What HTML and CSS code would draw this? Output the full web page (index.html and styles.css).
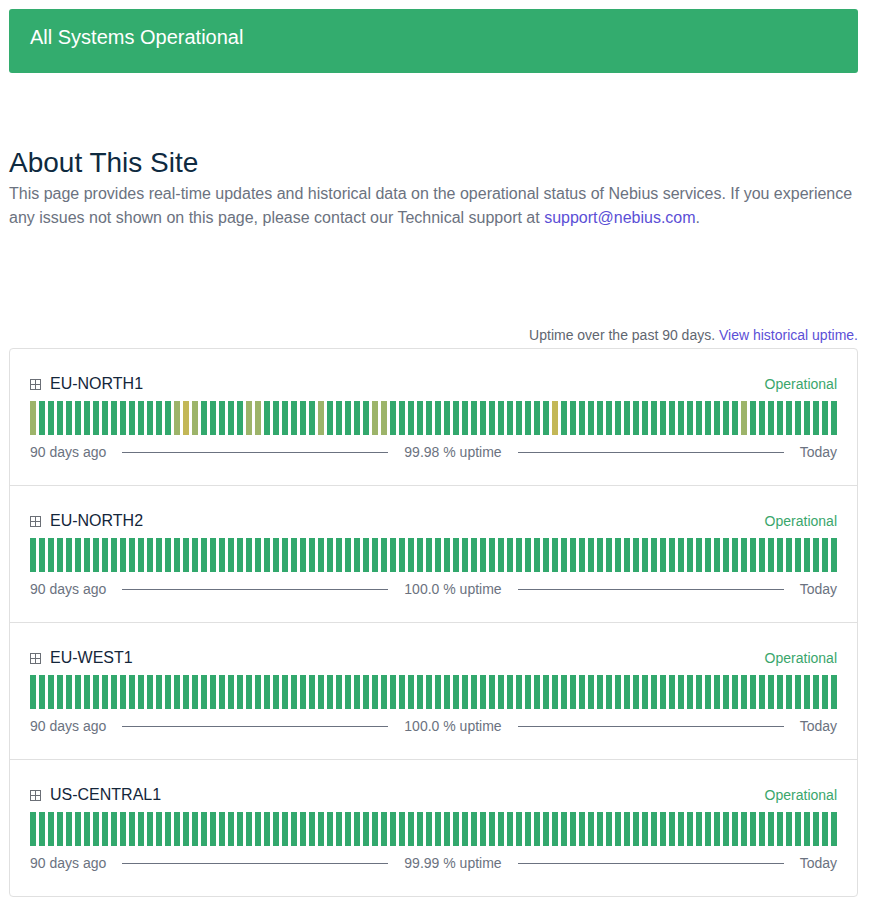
FILE: index.html
```html
<!DOCTYPE html>
<html lang="en">
<head>
    <meta charset="UTF-8">
    <meta name="viewport" content="width=device-width, initial-scale=1.0">
    <title>Nebius Status</title>
    <link rel="stylesheet" href="styles.css">
</head>
<body>
    <div class="container">
        <div class="status-banner">All Systems Operational</div>

        <div class="about">
            <h2 class="about-title">About This Site</h2>
            <p class="about-text">This page provides real-time updates and historical data on the operational status of Nebius services. If you experience any issues not shown on this page, please contact our Technical support at <a href="#" class="link">support@nebius.com</a>.</p>
        </div>

        <div class="uptime-note">Uptime over the past 90 days. <a href="#" class="link">View historical uptime.</a></div>

        <div class="components" id="components"></div>
    </div>

    <script>
        var components = [
            { name: "EU-NORTH1", uptime: "99.98", olive: [0, 16, 18, 24, 25, 32, 38, 39, 79], yellow: [17, 58] },
            { name: "EU-NORTH2", uptime: "100.0", olive: [], yellow: [] },
            { name: "EU-WEST1", uptime: "100.0", olive: [], yellow: [] },
            { name: "US-CENTRAL1", uptime: "99.99", olive: [], yellow: [] }
        ];

        var icon = '<svg class="expand-icon" width="11" height="11" viewBox="0 0 11 11">' +
            '<rect x="0.5" y="0.5" width="10" height="10" fill="none" stroke="#6b6f76" stroke-width="1"/>' +
            '<path d="M1 5.5h9M5.5 1v9" stroke="#6b6f76" stroke-width="1"/></svg>';

        var html = '';
        components.forEach(function (c) {
            var bars = '';
            for (var i = 0; i < 90; i++) {
                var cls = 'bar';
                if (c.olive.indexOf(i) !== -1) cls += ' bar-minor';
                if (c.yellow.indexOf(i) !== -1) cls += ' bar-partial';
                bars += '<span class="' + cls + '"></span>';
            }
            html += '<div class="component">' +
                '<div class="component-head">' +
                    '<span class="component-name">' + icon + c.name + '</span>' +
                    '<span class="component-status">Operational</span>' +
                '</div>' +
                '<div class="bars">' + bars + '</div>' +
                '<div class="component-foot">' +
                    '<span>90 days ago</span><span class="rule"></span>' +
                    '<span>' + c.uptime + ' % uptime</span><span class="rule"></span>' +
                    '<span>Today</span>' +
                '</div>' +
            '</div>';
        });
        document.getElementById("components").innerHTML = html;
    </script>
</body>
</html>
```

FILE: styles.css
```css
body {
    font-family: 'Liberation Sans', Arial, sans-serif;
    background-color: #fff;
    color: #333;
    margin: 0;
    padding: 0;
}

.container {
    width: 849px;
    margin: 9px;
}

.status-banner {
    background-color: #33ac6e;
    color: #fff;
    font-size: 20px;
    line-height: 24px;
    padding: 16px 21px 24px;
    border-radius: 3px;
}

.about {
    margin-top: 73px;
}

.about-title {
    font-size: 28px;
    font-weight: normal;
    line-height: 34px;
    color: #0e2a40;
    margin: 0;
}

.about-text {
    font-size: 16px;
    line-height: 24px;
    color: #6b7280;
    margin: 2px 0 0;
}

.link {
    color: #5b4fd6;
    text-decoration: none;
}

.uptime-note {
    margin-top: 95px;
    text-align: right;
    font-size: 14px;
    line-height: 20px;
    color: #5f6670;
}

.components {
    margin-top: 3px;
    border: 1px solid #e0e0e0;
    border-radius: 4px;
}

.component {
    padding: 23px 20px 23px;
    border-top: 1px solid #e0e0e0;
}

.component:first-child {
    border-top: none;
}

.component-head {
    display: flex;
    justify-content: space-between;
    align-items: center;
    line-height: 24px;
}

.component-name {
    display: flex;
    align-items: center;
    font-size: 16px;
    color: #14263a;
}

.expand-icon {
    margin-right: 9px;
}

.component-status {
    font-size: 14px;
    color: #3aa66c;
}

.bars {
    display: flex;
    gap: 3px;
    height: 34px;
    margin-top: 5px;
}

.bar {
    flex: 1;
    background-color: #32a86d;
}

.bar-minor {
    background-color: #9db46a;
}

.bar-partial {
    background-color: #c3b757;
}

.component-foot {
    display: flex;
    align-items: center;
    margin-top: 7px;
    font-size: 14px;
    line-height: 20px;
    color: #6b7280;
}

.rule {
    flex: 1;
    height: 1px;
    background-color: #6b7280;
    margin: 0 16px;
}
```
